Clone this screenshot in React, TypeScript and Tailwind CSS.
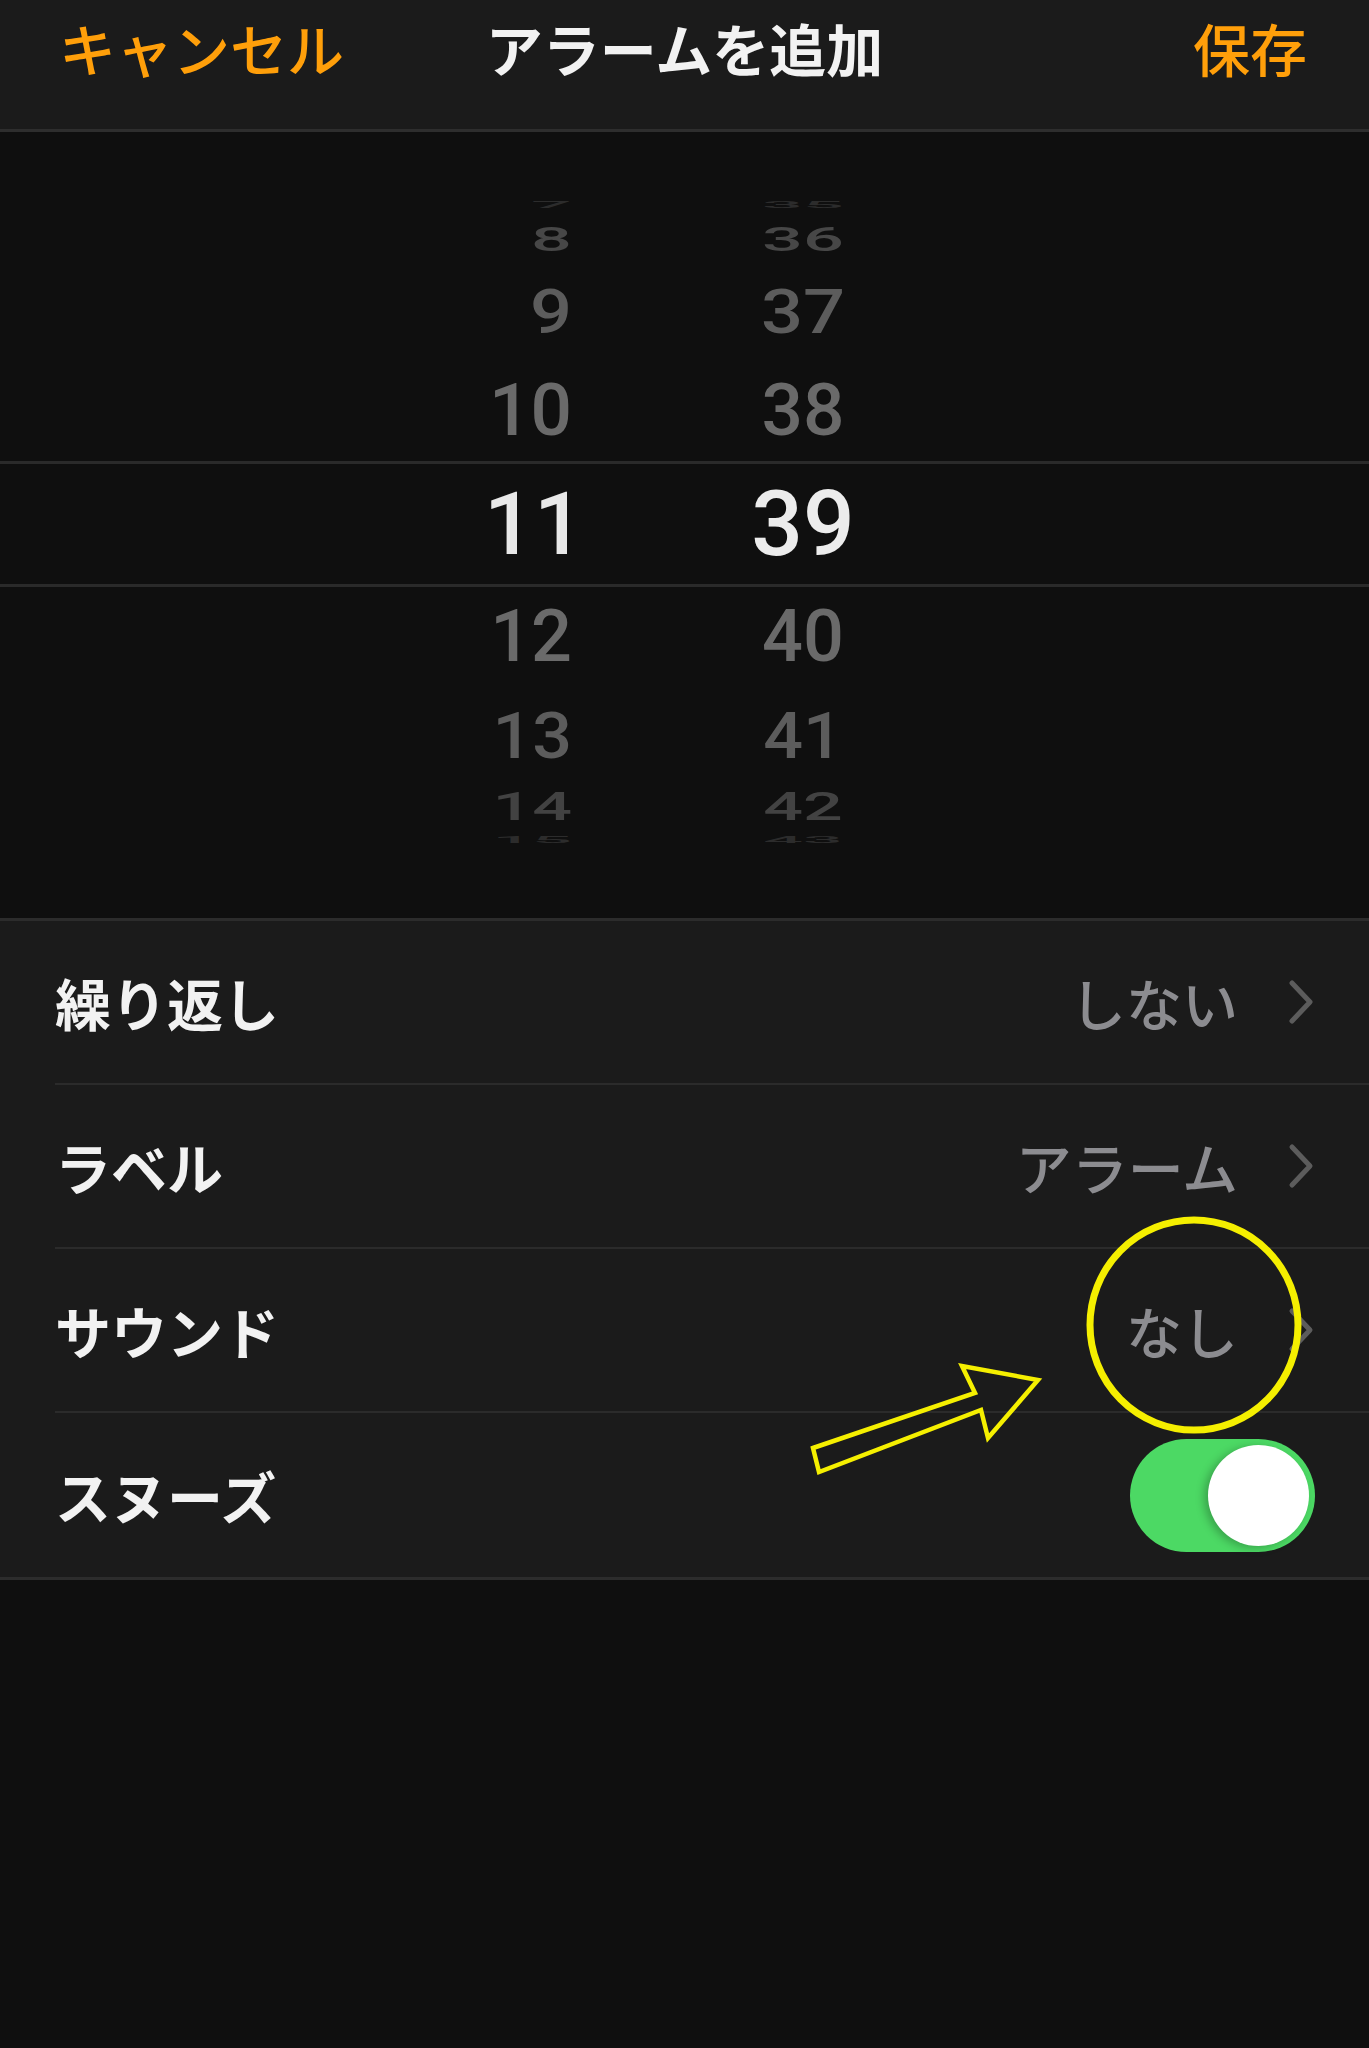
import React from "react";

type Num = {
  h: string;
  m: string;
  row: string;
  size: string;
  squash: string;
  color: string;
};

const above: Num[] = [
  { h: "7", m: "35", row: "h-[20px]", size: "text-[72px]", squash: "scale-y-[0.12]", color: "text-[#2c2c2c]" },
  { h: "8", m: "36", row: "h-[50px]", size: "text-[72px]", squash: "scale-y-[0.45]", color: "text-[#474747]" },
  { h: "9", m: "37", row: "h-[94px]", size: "text-[74px]", squash: "scale-y-[0.82]", color: "text-[#5c5c5c]" },
  { h: "10", m: "38", row: "h-[102px]", size: "text-[73px]", squash: "scale-y-100", color: "text-[#6a6a6a]" },
];

const below: Num[] = [
  { h: "12", m: "40", row: "h-[100px]", size: "text-[72px]", squash: "scale-y-100", color: "text-[#6a6a6a]" },
  { h: "13", m: "41", row: "h-[98px]", size: "text-[70px]", squash: "scale-y-[0.92]", color: "text-[#5c5c5c]" },
  { h: "14", m: "42", row: "h-[44px]", size: "text-[70px]", squash: "scale-y-[0.55]", color: "text-[#424242]" },
  { h: "15", m: "43", row: "h-[22px]", size: "text-[70px]", squash: "scale-y-[0.12]", color: "text-[#2c2c2c]" },
];

const digits = "font-['Roboto','Liberation_Sans',sans-serif] font-medium leading-none";
const jp = "font-['Noto_Sans_CJK_JP','Liberation_Sans',sans-serif]";

function PickerRow({ n }: { n: Num }) {
  return (
    <div className={`${n.row} flex items-center overflow-hidden`}>
      <div className={`w-[572px] text-right ${digits} ${n.size} ${n.color} ${n.squash}`}>
        {n.h}
      </div>
      <div className={`ml-[126px] w-[210px] text-center ${digits} ${n.size} ${n.color} ${n.squash}`}>
        {n.m}
      </div>
    </div>
  );
}

function Chevron() {
  return (
    <svg width="28" height="46" viewBox="0 0 28 46" className="ml-[49px] shrink-0">
      <polyline
        points="5,4 23,23 5,42"
        fill="none"
        stroke="#5c5c5c"
        strokeWidth="5"
        strokeLinecap="round"
        strokeLinejoin="round"
      />
    </svg>
  );
}

function ListRow({
  label,
  value,
  last,
  children,
}: {
  label: string;
  value?: string;
  last?: boolean;
  children?: React.ReactNode;
}) {
  return (
    <div className="pl-[55px]">
      <div
        className={`h-[164px] flex items-center justify-between pr-[54px] ${
          last ? "" : "border-b-2 border-[#2b2b2b]"
        }`}
      >
        <p className={`${jp} text-[56px] leading-none font-bold text-[#f2f2f2]`}>{label}</p>
        {children ?? (
          <div className="flex items-center">
            <span className={`${jp} text-[56px] leading-none font-medium text-[#8c8c90]`}>{value}</span>
            <Chevron />
          </div>
        )}
      </div>
    </div>
  );
}

export default function App() {
  return (
    <div className="relative w-full min-h-[2048px] bg-[#0f0f0f]">
      {/* nav bar */}
      <div className="h-[132px] bg-[#1b1b1b] border-b-[3px] border-[#2e2e2e] px-[59px] pb-[35px] grid grid-cols-3 items-center">
        <button className={`${jp} text-left text-[57px] leading-none font-medium text-[#ff9f0a]`}>
          キャンセル
        </button>
        <p className={`${jp} text-center whitespace-nowrap text-[57px] leading-none font-semibold text-[#f2f2f2]`}>
          アラームを追加
        </p>
        <button className={`${jp} text-right text-[57px] leading-none font-medium text-[#ff9f0a] pr-[3px]`}>
          保存
        </button>
      </div>

      {/* time picker */}
      <div className="h-[786px] pt-[63px] flex flex-col">
        {above.map((n) => (
          <PickerRow key={n.h} n={n} />
        ))}
        <div className="h-[126px] border-y-[3px] border-[#2a2a2a] flex items-center">
          <div className={`w-[584px] text-right ${digits} text-[88px] text-[#e8e8e8]`}>11</div>
          <div className={`ml-[114px] w-[210px] text-center ${digits} text-[91px] text-[#ececec]`}>
            39
          </div>
        </div>
        {below.map((n) => (
          <PickerRow key={n.h} n={n} />
        ))}
      </div>

      {/* settings list */}
      <div className="bg-[#1b1b1b] border-y-[3px] border-[#2c2c2c]">
        <ListRow label="繰り返し" value="しない" />
        <ListRow label="ラベル" value="アラーム" />
        <ListRow label="サウンド" value="なし" />
        <ListRow label="スヌーズ" last>
          <div className="w-[185px] h-[113px] rounded-full bg-[#4cd964] p-[6px] flex justify-end">
            <div className="w-[101px] h-[101px] rounded-full bg-white shadow-[-4px_2px_8px_rgba(0,0,0,0.25)]" />
          </div>
        </ListRow>
      </div>

      {/* annotation */}
      <svg
        className="absolute inset-0 w-full h-[2048px] pointer-events-none"
        viewBox="0 0 1369 2048"
      >
        <ellipse cx="1194" cy="1325" rx="104" ry="105" fill="none" stroke="#f5ef00" strokeWidth="7" />
        <polygon
          points="813,1448 975,1393 962,1366 1038,1380 988,1438 981,1410 819,1472"
          fill="none"
          stroke="#f5ef00"
          strokeWidth="4.5"
          strokeLinejoin="miter"
        />
      </svg>
    </div>
  );
}
